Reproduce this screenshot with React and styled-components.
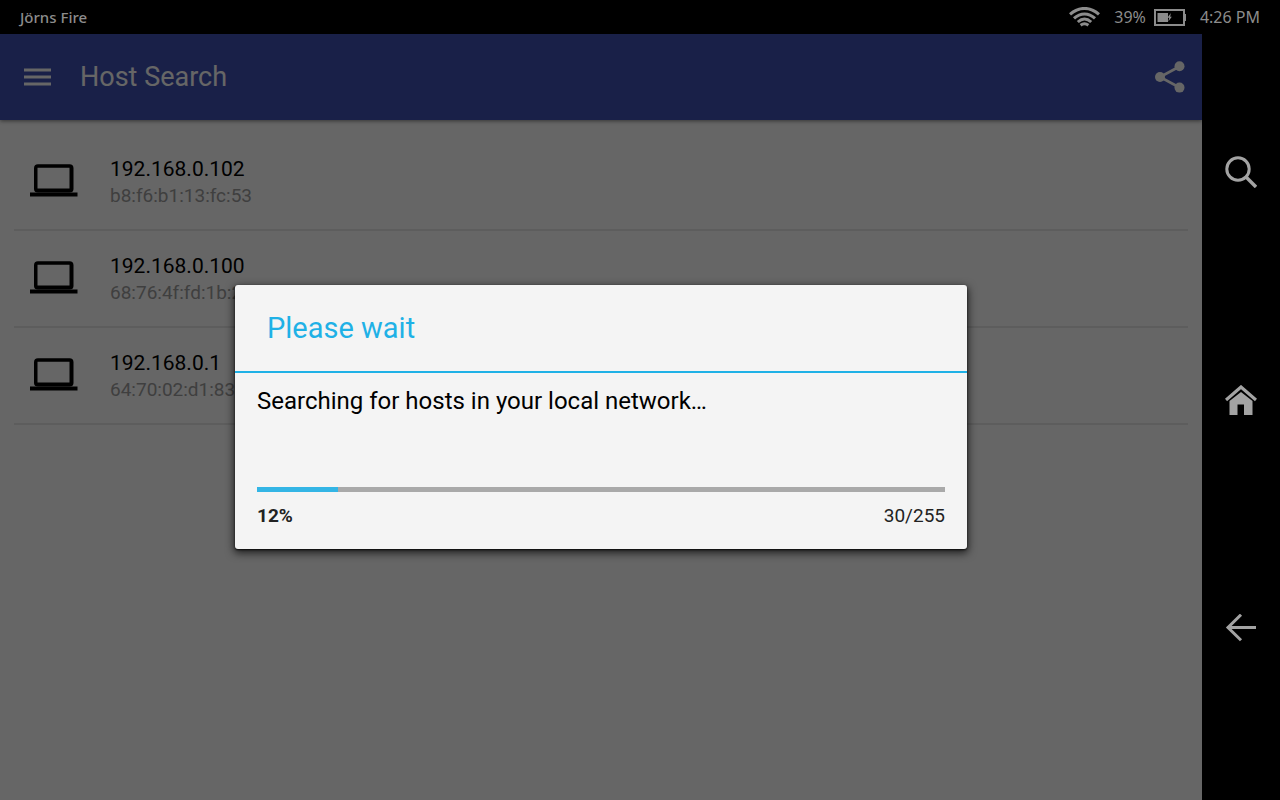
import React from 'react';
import styled, { createGlobalStyle } from 'styled-components';

const hosts = [
  { ip: '192.168.0.102', mac: 'b8:f6:b1:13:fc:53' },
  { ip: '192.168.0.100', mac: '68:76:4f:fd:1b:2e' },
  { ip: '192.168.0.1', mac: '64:70:02:d1:83:5a' },
];

const WifiIcon = () => (
  <svg width="31" height="20" viewBox="0 0 31 20" fill="none" stroke="currentColor" strokeWidth="3">
    <path d="M1 7.4C9.5-0.6 21.5-0.6 30 7.4" />
    <path d="M5 11.4C11.5 5.4 19.5 5.4 26 11.4" />
    <path d="M8.8 15C13 11.2 18 11.2 22.2 15" />
    <path d="M11.6 18.2C14.2 16.2 16.8 16.2 19.4 18.2" />
  </svg>
);

const BatteryIcon = () => (
  <svg width="32" height="17" viewBox="0 0 32 17">
    <rect x="1" y="1" width="29" height="15" fill="none" stroke="currentColor" strokeWidth="2" />
    <rect x="30" y="5" width="2" height="7" fill="currentColor" />
    <rect x="3.5" y="4" width="10.5" height="9" fill="currentColor" />
    <path d="M16.8 4L13.4 8.8H15.2L14.4 12.6L17.8 7.8H16.2Z" fill="currentColor" />
  </svg>
);

const MenuIcon = () => (
  <svg width="27" height="18" viewBox="0 0 27 18" fill="currentColor">
    <path d="M0 0.5H27V3.5H0ZM0 7.5H27V10.5H0ZM0 14.5H27V17.5H0Z" />
  </svg>
);

const ShareIcon = () => (
  <svg width="30" height="32" viewBox="0 0 30 32" fill="currentColor">
    <path d="M24.5 5.5L5 16L24.5 26.5" fill="none" stroke="currentColor" strokeWidth="2.6" />
    <circle cx="24.5" cy="5.3" r="5" />
    <circle cx="5" cy="16" r="5" />
    <circle cx="24.5" cy="26.6" r="5" />
  </svg>
);

const LaptopIcon = () => (
  <svg width="48" height="36" viewBox="0 0 48 36">
    <path d="M0 28.4H47.5V32.4H0Z" />
    <path
      fillRule="evenodd"
      d="M8 0.3H39.5Q43.5 0.3 43.5 4.3V25Q43.5 28.6 39.5 28.6H8Q4 28.6 4 25V4.3Q4 0.3 8 0.3ZM7.5 3.8V24.6H39.5V3.8Z"
    />
  </svg>
);

const SearchIcon = () => (
  <svg width="32" height="32" viewBox="0 0 32 32" fill="none" stroke="currentColor" strokeWidth="3">
    <circle cx="13" cy="13" r="11.2" />
    <path d="M20.8 20.8L31 31" strokeWidth="3.4" />
  </svg>
);

const HomeIcon = () => (
  <svg width="32" height="30" viewBox="0 0 32 30">
    <path d="M1 15L16 2L31 15" fill="none" stroke="currentColor" strokeWidth="3.2" />
    <path d="M4.5 16L16 7L27.5 16V30H19V19.5H12.5V30H4.5Z" fill="currentColor" />
  </svg>
);

const BackIcon = () => (
  <svg width="32" height="28" viewBox="0 0 32 28" fill="none" stroke="currentColor" strokeWidth="3">
    <path d="M16 0.7L3 13.5L16 26.3" />
    <path d="M2.5 13.5H31" />
  </svg>
);

const App = () => (
  <>
    <GlobalStyle />
    <Screen>
      <StatusBar>
        <DeviceName>Jörns Fire</DeviceName>
        <WifiIcon />
        <Battery>
          <span>39%</span>
          <BatteryIcon />
        </Battery>
        <span>4:26 PM</span>
      </StatusBar>
      <Content>
        <Main>
          <AppBar>
            <IconButton aria-label="Menu">
              <MenuIcon />
            </IconButton>
            <AppTitle>Host Search</AppTitle>
            <IconButton aria-label="Share">
              <ShareIcon />
            </IconButton>
          </AppBar>
          <HostList>
            {hosts.map(host => (
              <HostRow key={host.ip}>
                <LaptopIcon />
                <div>
                  <HostIp>{host.ip}</HostIp>
                  <HostMac>{host.mac}</HostMac>
                </div>
              </HostRow>
            ))}
          </HostList>
          <Overlay>
            <Dialog role="dialog" aria-labelledby="dialog-title">
              <DialogTitle id="dialog-title">Please wait</DialogTitle>
              <DialogBody>
                <Message htmlFor="search-progress">
                  Searching for hosts in your local network…
                </Message>
                <Progress id="search-progress" value={30} max={255} />
                <ProgressInfo>
                  <Percent>12%</Percent>
                  <span>30/255</span>
                </ProgressInfo>
              </DialogBody>
            </Dialog>
          </Overlay>
        </Main>
        <NavRail>
          <NavButton aria-label="Search">
            <SearchIcon />
          </NavButton>
          <NavButton aria-label="Home">
            <HomeIcon />
          </NavButton>
          <NavButton aria-label="Back">
            <BackIcon />
          </NavButton>
        </NavRail>
      </Content>
    </Screen>
  </>
);
export default App;

const GlobalStyle = createGlobalStyle`
  * {
    box-sizing: border-box;
  }
  body {
    margin: 0;
    background: #000;
    font-family: Roboto, sans-serif;
  }
  svg {
    display: block;
    flex: none;
  }
`;
const Screen = styled.div`
  display: flex;
  flex-direction: column;
  min-height: 100vh;
`;
const StatusBar = styled.header`
  display: flex;
  align-items: center;
  gap: 14px;
  height: 34px;
  padding: 0 20px;
  background: #000;
  color: #8c8c8c;
  font-family: 'Noto Sans', sans-serif;
  font-size: 16px;
`;
const DeviceName = styled.span`
  flex: 1;
  font-size: 15px;
  font-weight: 500;
`;
const Battery = styled.div`
  display: flex;
  align-items: center;
  gap: 8px;
`;
const Content = styled.div`
  flex: 1;
  display: flex;
`;
const Main = styled.main`
  position: relative;
  flex: 1;
  display: flex;
  flex-direction: column;
  background: #fff;
`;
const AppBar = styled.div`
  display: flex;
  align-items: center;
  height: 86px;
  padding: 0 17px 0 24px;
  background: #3f51b5;
  color: #fff;
  box-shadow: 0 1px 4px rgba(0, 0, 0, 0.5);
`;
const IconButton = styled.button`
  padding: 0;
  border: 0;
  background: none;
  color: inherit;
  cursor: pointer;
`;
const AppTitle = styled.h1`
  flex: 1;
  margin: 0 0 0 29px;
  font-size: 27px;
  font-weight: 400;
  line-height: 34px;
`;
const HostList = styled.ul`
  margin: 0;
  padding: 14px 14px 0;
  list-style: none;
`;
const HostRow = styled.li`
  display: flex;
  align-items: center;
  gap: 32px;
  height: 97px;
  padding: 0 16px;
  border-bottom: 2px solid #e8e8e8;
`;
const HostIp = styled.div`
  font-size: 21px;
  line-height: 28px;
  color: #000;
`;
const HostMac = styled.div`
  font-size: 19px;
  line-height: 26px;
  color: #9e9e9e;
`;
const Overlay = styled.div`
  position: absolute;
  inset: 0;
  display: flex;
  align-items: center;
  justify-content: center;
  background: rgba(0, 0, 0, 0.6);
`;
const Dialog = styled.section`
  width: 80%;
  max-width: 732px;
  border-radius: 3px;
  background: #f4f4f4;
  color: #000;
  box-shadow: 0 3px 8px 1px rgba(0, 0, 0, 0.7), 0 1px 2px rgba(0, 0, 0, 0.8);
`;
const DialogTitle = styled.h2`
  margin: 0;
  padding: 0 32px;
  border-bottom: 2px solid #1fb1e6;
  font-size: 29px;
  font-weight: 400;
  line-height: 86px;
  color: #1fb1e6;
`;
const DialogBody = styled.div`
  padding: 14px 22px 21px;
`;
const Message = styled.label`
  display: block;
  margin-bottom: 72px;
  font-size: 24px;
  line-height: 28px;
`;
const Progress = styled.progress`
  appearance: none;
  display: block;
  width: 100%;
  height: 5px;
  margin-bottom: 12px;
  border: 0;
  background: #a9a9a9;

  &::-webkit-progress-bar {
    background: #a9a9a9;
  }
  &::-webkit-progress-value {
    background: #33b5e5;
  }
`;
const ProgressInfo = styled.div`
  display: flex;
  justify-content: space-between;
  font-size: 19px;
  line-height: 24px;
  color: #222;
`;
const Percent = styled.span`
  font-weight: 700;
`;
const NavRail = styled.nav`
  display: flex;
  flex-direction: column;
  width: 78px;
  padding: 24px 0 58px;
  background: #000;
`;
const NavButton = styled.button`
  flex: 1;
  display: flex;
  align-items: center;
  justify-content: center;
  padding: 0;
  border: 0;
  background: none;
  color: #a3a3a3;
  cursor: pointer;
`;
